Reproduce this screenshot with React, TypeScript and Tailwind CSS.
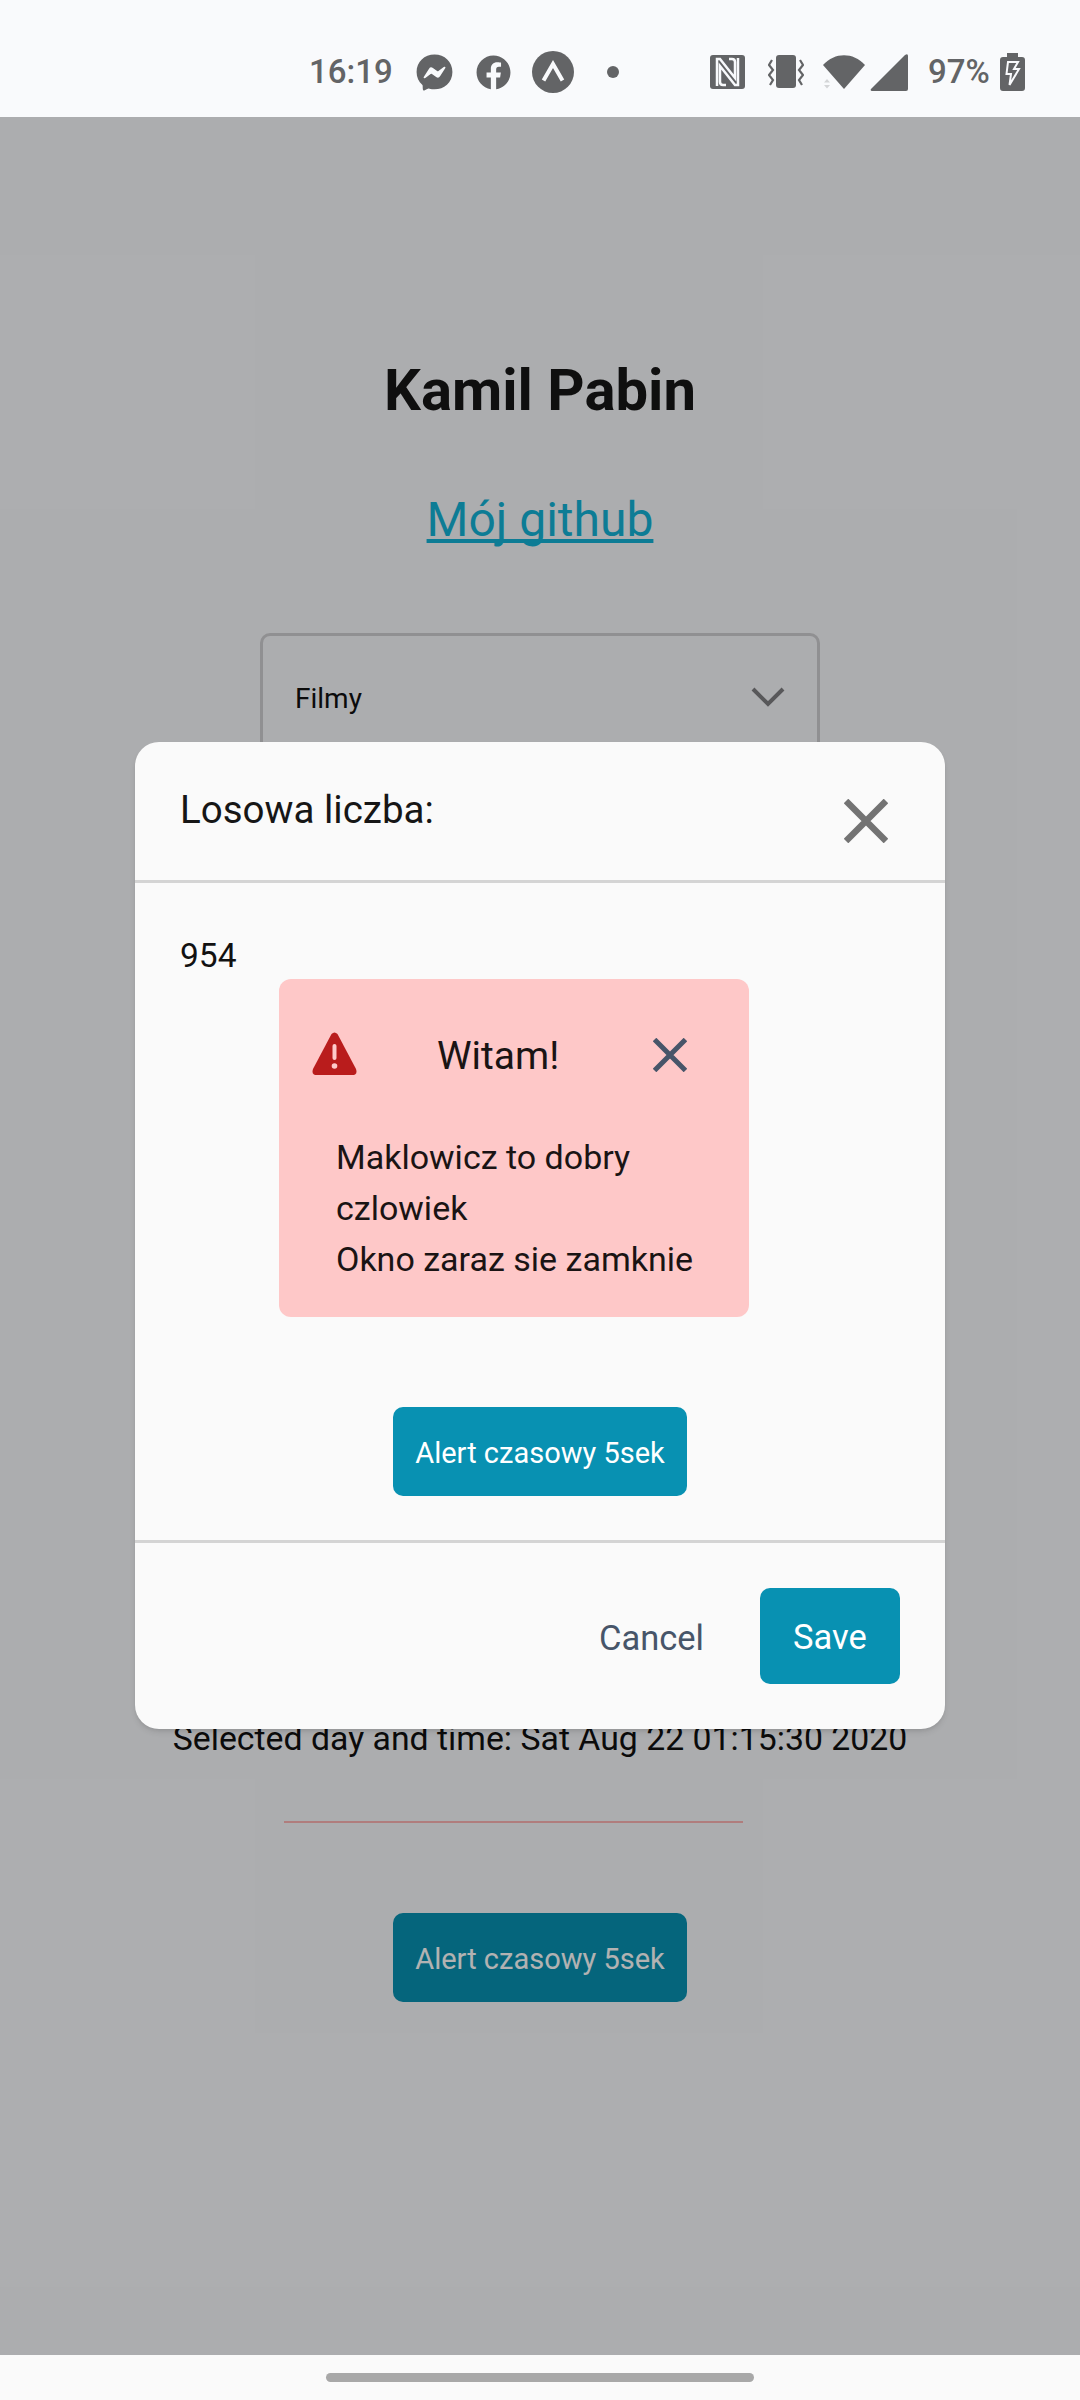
import { FaFacebook, FaFacebookMessenger } from 'react-icons/fa';

const roboto = { fontFamily: 'Roboto, "Noto Sans", sans-serif' };

const AlertButton = () => (
  <button className="w-[294px] h-[89px] pt-[3px] rounded-[10px] bg-[#0891b2] text-white text-[29px] leading-[40px] flex items-center justify-center">
    Alert czasowy 5sek
  </button>
);

const ArcIcon = () => (
  <svg width="42" height="42" viewBox="0 0 42 42" className="block">
    <circle cx="21" cy="21" r="21" fill="#636466" />
    <path d="M11.5 29.5 L21 13 L30.5 29.5" fill="none" stroke="#f9fafc" strokeWidth="4" />
  </svg>
);

const NfcIcon = () => (
  <svg width="35" height="34" viewBox="0 0 35 34" className="block">
    <rect width="35" height="34" rx="3" fill="#636466" />
    <path d="M7 31 V4 H10 L25 23 V7 C25 5 24 4 22 4 H19 M28 3 V30 H25 L10 11 V27 C10 29 11 30 13 30 H16" fill="none" stroke="#f9fafc" strokeWidth="2.5" />
  </svg>
);

const VibrateIcon = () => (
  <svg width="36" height="34" viewBox="0 0 36 34" className="block">
    <rect x="8" y="0" width="20" height="33" rx="3" fill="#636466" />
    <path d="M4 5 L1 10 L5 15 L1 20 L5 25 L2 30 M32 5 L35 10 L31 15 L35 20 L31 25 L34 30" fill="none" stroke="#636466" strokeWidth="2.2" />
  </svg>
);

const WifiIcon = () => (
  <svg width="42" height="34" viewBox="0 0 42 34" className="block">
    <path d="M0 10 C12 -3 30 -3 42 10 L21 34 Z" fill="#636466" />
    <path d="M4 24 L1 27.5 H7 Z M1 30 L4 33.5 L7 30 Z" fill="#d4d5d7" />
  </svg>
);

const SignalIcon = () => (
  <svg width="38" height="37" viewBox="0 0 38 37" className="block">
    <path d="M38 2 V35 Q38 37 36 37 H2 Q0 37 1 35 L35 1 Q38 -1 38 2 Z" fill="#636466" />
  </svg>
);

const BatteryIcon = () => (
  <svg width="25" height="38" viewBox="0 0 25 38" className="block">
    <path d="M7 0 H18 V4 H22 Q25 4 25 7 V35 Q25 38 22 38 H3 Q0 38 0 35 V7 Q0 4 3 4 H7 Z" fill="#636466" />
    <path d="M15 9 H8 L6.5 21 H11 L9.5 32 L19 16 H14 L18 9 Z" fill="none" stroke="#f9fafc" strokeWidth="2" />
  </svg>
);

const StatusBar = () => (
  <div className="h-[117px] bg-[#f9fafc] flex items-center pl-[309px] pt-[27px] text-[#636466] shrink-0">
    <span className="text-[33px] leading-[40px] font-medium w-[82px]">16:19</span>
    <FaFacebookMessenger className="ml-[25px] w-[37px] h-[37px]" />
    <FaFacebook className="ml-[23px] w-[35px] h-[35px]" />
    <div className="ml-[21px]">
      <ArcIcon />
    </div>
    <div className="ml-[33px] w-3 h-3 rounded-full bg-[#636466]" />
    <div className="ml-[91px]">
      <NfcIcon />
    </div>
    <div className="ml-[23px]">
      <VibrateIcon />
    </div>
    <div className="ml-[19px]">
      <WifiIcon />
    </div>
    <div className="ml-[5px]">
      <SignalIcon />
    </div>
    <span className="ml-[20px] text-[33px] leading-[40px] font-medium w-[60px]">97%</span>
    <div className="ml-[12px]">
      <BatteryIcon />
    </div>
  </div>
);

const Page = () => (
  <div className="flex flex-col items-center pt-[239px]">
    <h1 className="text-[58px] leading-[68px] font-bold text-[#161616]">Kamil Pabin</h1>
    <a className="mt-[68px] text-[48px] leading-[56px] text-[#14b2d6] underline [text-decoration-skip-ink:none]">Mój github</a>
    <div className="mt-[85px] w-[560px] h-[120px] border-[3px] border-[#cfcfd2] rounded-[10px] flex items-start justify-between pl-[32px] pr-[32px] pt-[43px]">
      <span className="text-[28px] leading-[40px] text-[#111]">Filmy</span>
      <svg width="34" height="20" viewBox="0 0 34 20" className="mt-[8px]" fill="none">
        <path d="M2 2 L17 17 L32 2" stroke="#7f7f82" strokeWidth="4" />
      </svg>
    </div>
    <p className="mt-[960px] text-[33.8px] leading-[51px] text-[#111] whitespace-nowrap">
      Selected day and time: Sat Aug 22 01:15:30 2020
    </p>
    <div className="mt-[57px] self-start ml-[284px] w-[459px] h-[2px] bg-[#fcb4b4]" />
    <div className="mt-[90px]">
      <AlertButton />
    </div>
  </div>
);

const WarningIcon = () => (
  <svg width="45" height="43" viewBox="0 0 45 43" className="block">
    <path d="M19.5 2 Q22.5 -1 25.5 2 L44 37 Q46 43 40 43 H5 Q-1 43 1 37 Z" fill="#b91c1c" />
    <rect x="20.5" y="12" width="4" height="16" rx="2" fill="#fecaca" />
    <circle cx="22.5" cy="34" r="2.8" fill="#fecaca" />
  </svg>
);

const CloseIcon = ({ size, stroke, width }: { size: number; stroke: string; width: number }) => (
  <svg width={size} height={size} viewBox="0 0 44 44" className="block">
    <path d="M2 2 L42 42 M42 2 L2 42" stroke={stroke} strokeWidth={width} fill="none" />
  </svg>
);

const Modal = () => (
  <div className="absolute left-[135px] top-[625px] w-[810px] h-[987px] bg-[#fafafa] rounded-[24px] shadow-md flex flex-col">
    {/* Header */}
    <div className="h-[141px] border-b-[3px] border-[#d4d4d4] flex items-start justify-between pl-[45px] pr-[57px] shrink-0">
      <span className="mt-[44px] text-[38.5px] leading-[48px] text-[#161616]">Losowa liczba:</span>
      <div className="mt-[57px]">
        <CloseIcon size={44} stroke="#737373" width={6.5} />
      </div>
    </div>

    {/* Body */}
    <div className="flex-1 flex flex-col">
      <p className="mt-[47px] ml-[45px] text-[33.5px] leading-[51px] text-[#111]">954</p>
      <div className="-mt-[2px] ml-[144px] w-[470px] h-[338px] bg-[#fec8c8] rounded-[12px]">
        <div className="flex items-start pt-[53px] pl-[33px]">
          <WarningIcon />
          <span className="ml-[80px] -mt-[0px] text-[39px] leading-[48px] text-[#1a1414]">Witam!</span>
          <div className="ml-[94px] mt-[6px]">
            <CloseIcon size={34} stroke="#475569" width={6.5} />
          </div>
        </div>
        <p className="mt-[52px] ml-[57px] w-[375px] text-[34px] leading-[51px] text-[#1a1414]">
          Maklowicz to dobry czlowiek
          <br />
          Okno zaraz sie zamknie
        </p>
      </div>
      <div className="mt-[90px] flex justify-center">
        <AlertButton />
      </div>
    </div>

    {/* Footer */}
    <div className="h-[189px] border-t-[3px] border-[#d4d4d4] flex items-start justify-end pt-[45px] pr-[45px] shrink-0">
      <button className="mt-[26px] text-[34.5px] leading-[48px] text-[#475569]">Cancel</button>
      <button className="ml-[56px] w-[140px] h-[96px] pt-[3px] rounded-[10px] bg-[#0891b2] text-white text-[34.5px]">Save</button>
    </div>
  </div>
);

export default function App() {
  return (
    <div className="w-[1080px] h-[2400px] bg-[#fafafa] flex flex-col overflow-hidden" style={roboto}>
      <StatusBar />
      <main className="relative flex-1 overflow-hidden bg-[#f7f8fb]">
        <Page />
        <div className="absolute inset-0 bg-black/30" />
        <Modal />
      </main>
      <div className="h-[45px] bg-[#fafafa] flex items-center justify-center shrink-0">
        <div className="w-[428px] h-[9px] rounded-full bg-[#a8a8a8]" />
      </div>
    </div>
  );
}
